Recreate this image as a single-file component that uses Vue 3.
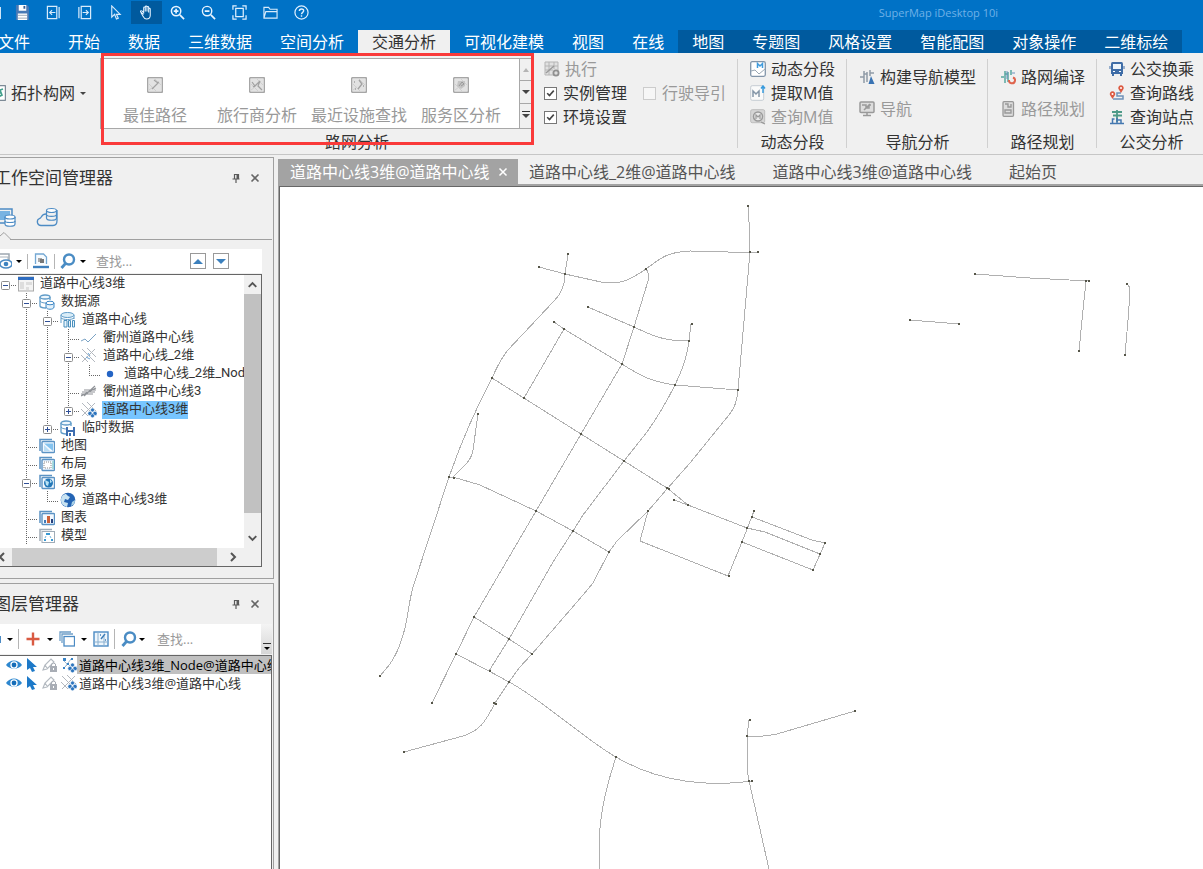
<template>
  <div class="desktop">
    <!-- title bar -->
    <header class="title-bar">
      <div class="quick-bar">
        <span class="quick-edge"></span>
        <button
          v-for="tool in quickTools"
          :key="tool.icon"
          type="button"
          class="quick-button"
          :class="{ active: tool.active }"
          :aria-label="tool.label"
        >
          <svg class="icon-quick" viewBox="0 0 16 16" v-html="icons[tool.icon]"></svg>
        </button>
      </div>
      <span class="app-title">SuperMap iDesktop 10i</span>
    </header>

    <!-- ribbon tabs -->
    <nav class="menu-bar">
      <button
        v-for="tab in menuTabs"
        :key="tab.name"
        type="button"
        class="menu-tab"
        :class="tab.type"
      >{{ tab.name }}</button>
    </nav>

    <!-- ribbon -->
    <section class="ribbon">
      <div class="ribbon-group network-group">
        <div class="group-body">
          <button type="button" class="topology-button">
            <svg class="icon" viewBox="0 0 16 16" v-html="icons.topology"></svg>
            <span>拓扑构网</span>
            <i class="caret"></i>
          </button>
          <div class="gallery">
            <div class="gallery-items">
              <button v-for="item in galleryItems" :key="item.name" type="button" class="gallery-item" disabled>
                <svg class="icon" viewBox="0 0 16 16" v-html="icons[item.icon]"></svg>
                <span>{{ item.name }}</span>
              </button>
            </div>
            <div class="gallery-scroll">
              <button type="button" aria-label="上一行" disabled><i class="caret up"></i></button>
              <button type="button" aria-label="下一行"><i class="caret wide"></i></button>
              <button type="button" aria-label="展开"><i class="caret wide bar"></i></button>
            </div>
            <div class="highlight"></div>
          </div>
          <div class="option-grid">
            <button type="button" class="ribbon-button" disabled>
              <svg class="icon" viewBox="0 0 16 16" v-html="icons.execute"></svg>
              <span>执行</span>
            </button>
            <span></span>
            <label class="check"><input type="checkbox" checked />实例管理</label>
            <label class="check disabled"><input type="checkbox" disabled />行驶导引</label>
            <label class="check"><input type="checkbox" checked />环境设置</label>
          </div>
        </div>
        <div class="group-caption">路网分析</div>
      </div>
      <div v-for="group in ribbonGroups" :key="group.name" class="ribbon-group side-group">
        <div class="group-body column" :class="{ loose: group.buttons.length === 2 }">
          <button
            v-for="button in group.buttons"
            :key="button.name"
            type="button"
            class="ribbon-button"
            :disabled="button.disabled"
          >
            <svg class="icon" viewBox="0 0 16 16" v-html="icons[button.icon]"></svg>
            <span>{{ button.name }}</span>
          </button>
        </div>
        <div class="group-caption">{{ group.name }}</div>
      </div>
    </section>

    <main class="workspace">
      <aside class="side">
        <!-- workspace manager -->
        <section class="panel">
          <header class="panel-header">
            <h2>工作空间管理器</h2>
            <button type="button" class="panel-action" aria-label="固定">
              <svg viewBox="0 0 10 10" v-html="icons.pin"></svg>
            </button>
            <button type="button" class="panel-action" aria-label="关闭">
              <svg viewBox="0 0 10 10" v-html="icons.close"></svg>
            </button>
          </header>
          <div class="view-tabs">
            <button type="button" aria-label="本地">
              <svg viewBox="0 0 22 20" v-html="icons.localView"></svg>
            </button>
            <button type="button" aria-label="云端">
              <svg viewBox="0 0 22 20" v-html="icons.cloudView"></svg>
            </button>
          </div>
          <svg class="view-notch" viewBox="0 0 12 8"><path d="M0 4 L4 .5 L11 7.5" fill="none" stroke="#a0a0a0" /></svg>
          <div class="view-line"></div>
          <div class="tool-strip">
            <svg class="icon" viewBox="0 0 16 16" v-html="icons.viewEye"></svg>
            <i class="caret dark"></i>
            <span class="strip-line"></span>
            <svg class="icon" viewBox="0 0 16 16" v-html="icons.drive"></svg>
            <span class="strip-line"></span>
            <svg class="icon" viewBox="0 0 16 16" v-html="icons.search"></svg>
            <i class="caret dark"></i>
            <input type="text" class="search" placeholder="查找..." aria-label="查找" />
            <button type="button" class="step-button" aria-label="上一个"><i class="caret up blue"></i></button>
            <button type="button" class="step-button" aria-label="下一个"><i class="caret blue"></i></button>
          </div>
          <div class="tree-box">
            <div class="tree-main">
              <ul class="tree">
                <li v-for="(node, index) in treeNodes" :key="index" class="tree-row">
                  <component
                    :is="isToggle(node, cell) ? 'button' : 'span'"
                    v-for="(kind, cell) in node.guides.split('')"
                    :key="cell"
                    class="guide"
                    :aria-label="isToggle(node, cell) ? '展开或折叠' : null"
                  >
                    <svg viewBox="0 0 21 18">
                      <path :d="guidePaths[kind]" class="guide-line" />
                      <g v-if="isToggle(node, cell)">
                        <rect x="6.5" y="6.5" width="8" height="8" rx="1" fill="#fff" stroke="#8c8c8c" />
                        <path :d="node.toggle === '+' ? 'M8 10.5h5M10.5 8v5' : 'M8 10.5h5'" stroke="#2f4f96" />
                      </g>
                    </svg>
                  </component>
                  <svg class="icon" viewBox="0 0 16 16" v-html="icons[node.icon]"></svg>
                  <span class="tree-label" :class="{ selected: node.selected }">{{ node.name }}</span>
                </li>
              </ul>
              <div class="scroll-v">
                <svg viewBox="0 0 18 19"><path d="M5 12 L9 8 L13 12" /></svg>
                <div class="thumb-v"></div>
                <svg viewBox="0 0 18 19"><path d="M5 7 L9 11 L13 7" /></svg>
              </div>
            </div>
            <div class="scroll-h">
              <svg viewBox="0 0 12 17"><path d="M4 5 L0 9 L4 13" /></svg>
              <div class="thumb-h"></div>
              <svg class="arrow-right" viewBox="0 0 12 17"><path d="M1 5 L5 9 L1 13" /></svg>
            </div>
          </div>
        </section>

        <!-- layer manager -->
        <section class="panel layer-panel">
          <header class="panel-header">
            <h2>图层管理器</h2>
            <button type="button" class="panel-action" aria-label="固定">
              <svg viewBox="0 0 10 10" v-html="icons.pin"></svg>
            </button>
            <button type="button" class="panel-action" aria-label="关闭">
              <svg viewBox="0 0 10 10" v-html="icons.close"></svg>
            </button>
          </header>
          <div class="layer-tools">
            <span class="cut-icon"></span>
            <i class="caret dark"></i>
            <span class="strip-line"></span>
            <svg class="icon" viewBox="0 0 16 16" v-html="icons.plus"></svg>
            <i class="caret dark"></i>
            <svg class="icon" viewBox="0 0 16 16" v-html="icons.stack"></svg>
            <i class="caret dark"></i>
            <svg class="icon" viewBox="0 0 16 16" v-html="icons.gridMap"></svg>
            <span class="strip-line"></span>
            <svg class="icon" viewBox="0 0 16 16" v-html="icons.search"></svg>
            <i class="caret dark search-caret"></i>
            <input type="text" class="search" placeholder="查找..." aria-label="查找图层" />
            <span class="overflow-mark"><i class="caret dark bar"></i></span>
          </div>
          <ul class="layers">
            <li v-for="layer in layers" :key="layer.name" class="layer-row">
              <svg class="icon" viewBox="0 0 16 16" v-html="icons.eye"></svg>
              <svg class="icon" viewBox="0 0 16 16" v-html="icons.pointer"></svg>
              <svg class="icon" viewBox="0 0 16 16" v-html="icons.editLock"></svg>
              <svg class="icon" viewBox="0 0 16 16" v-html="icons[layer.icon]"></svg>
              <span class="layer-name" :class="{ selected: layer.selected }">{{ layer.name }}</span>
            </li>
          </ul>
        </section>
      </aside>

      <!-- documents -->
      <section class="documents">
        <div class="doc-tabs">
          <button
            v-for="(doc, index) in documents"
            :key="index"
            type="button"
            class="doc-tab"
            :class="{ active: index === 0 }"
          >
            <span>{{ doc }}</span>
            <svg v-if="index === 0" viewBox="0 0 10 10" v-html="icons.tabClose"></svg>
          </button>
        </div>
        <div class="map">
          <svg width="923" height="682" viewBox="280 187 923 682">
            <path v-for="road in roads" :key="road" :d="road" class="road" />
            <rect
              v-for="[x, y] in junctions"
              :key="x + '-' + y"
              :x="x - 1"
              :y="y - 1"
              width="2"
              height="2"
              class="junction"
            />
          </svg>
        </div>
      </section>
    </main>
  </div>
</template>

<script setup>
// shared pieces of the icons
const grayTile = '<rect x=".5" y=".5" width="15" height="15" rx="1.5" fill="#e2e2e2" stroke="#a6a6a6" stroke-width="1.4"/><path d="M2 7l7 7M8 2l6 6M2 13l4-3" stroke="#cfcfcf" fill="none"/>';
const folderPair = '<path d="M1 13V1.500h12" fill="none" stroke="#5b93c4" stroke-width="1.500"/><rect x="3" y="3.500" width="12.500" height="11" rx="1" fill="#f3f9ff" stroke="#5b93c4" stroke-width="1.400"/>';
const crossRoads = '<path d="M1 1l13 13M14 1L1 14M6 0l9 9M0 7l7 7" stroke="#b3b8bf" fill="none"/>';
const railMark = '<path d="M1 8h4M5 2v12M11 1v6M8 3v10M5 5h3M11 4h4" stroke="#8f9aa6" stroke-width="1.500" fill="none"/>';
const database = '<path d="M1 3v9c0 1 3 2 6 2M11 3v3" fill="none" stroke="#5f9bc8" stroke-width="1.300"/><ellipse cx="6" cy="3" rx="5" ry="2" fill="#eef7fd" stroke="#5f9bc8" stroke-width="1.300"/><path d="M1 7c1 2 5 2 6 2" fill="none" stroke="#5f9bc8"/>';
const cluster = '<g fill="#2c74bd" stroke="#fff" stroke-width=".6"><circle cx="11.500" cy="8" r="2"/><circle cx="9" cy="11.500" r="2.200"/><circle cx="14" cy="11.500" r="2.200"/><circle cx="11.500" cy="13.800" r="2"/></g>';

const icons = {
  save: '<path d="M1 0h12l2 2v14H1z" fill="#4779b5"/><path d="M4 0h8v6H4zM3 9h10v7H3z" fill="#fff"/><path d="M9 1h2v3H9z" fill="#345f94"/><path d="M3 11h10M3 14h10" stroke="#9aa7b5"/>',
  back: '<path d="M1.500 1.500h10v13h-10zM14 2v12M4 8h6M6.500 5.500L4 8l2.500 2.500" fill="none" stroke="#d8ebfb" stroke-width="1.300"/>',
  forward: '<path d="M4.500 1.500h10v13h-10zM2 2v12M6 8h6M9.500 5.500L12 8l-2.500 2.500" fill="none" stroke="#d8ebfb" stroke-width="1.300"/>',
  cursor: '<path d="M4 1v12l3-3 2 5 2-1-2-4h4z" fill="none" stroke="#d8ebfb" stroke-width="1.200"/>',
  hand: '<path d="M5 10L2 7.500C1 6.500 2 5.500 3.500 6.500L5 8V3c0-1.300 1.700-1.300 1.700 0v4V2c0-1.300 1.800-1.300 1.800 0v5V2.500c0-1.300 1.800-1.300 1.800 0V8V4.500c0-1.200 1.700-1.200 1.700 0V11c0 2.500-1 4-4 4S5.500 13.500 2 8" fill="none" stroke="#e8f4ff" stroke-width="1.100"/>',
  zoomIn: '<circle cx="6.500" cy="6.500" r="5" fill="none" stroke="#e8f4ff" stroke-width="1.600"/><path d="M4 6.500h5M6.500 4v5M10.500 10.500L15 15" stroke="#e8f4ff" stroke-width="1.800"/>',
  zoomOut: '<circle cx="6.500" cy="6.500" r="5" fill="none" stroke="#e8f4ff" stroke-width="1.500"/><path d="M4 6.500h5M10.500 10.500L15 15" stroke="#e8f4ff" stroke-width="1.800"/>',
  extent: '<path d="M1 5V1h4M11 1h4v4M15 11v4h-4M5 15H1v-4M4 3.500h8v9H4z" fill="none" stroke="#e0f0ff" stroke-width="1.300"/>',
  folder: '<path d="M1 14V2.500h5l1.500 2H15V14zM1 14l2-7h12" fill="none" stroke="#d8ebfb" stroke-width="1.200"/>',
  help: '<circle cx="8" cy="8" r="7" fill="none" stroke="#e0f0ff" stroke-width="1.300"/><path d="M5.700 6.500c0-3 4.600-3 4.600-.3 0 1.800-2.300 1.600-2.300 3.800M8 11v1.600" fill="none" stroke="#e0f0ff" stroke-width="1.500"/>',
  topology: '<rect x=".5" y=".5" width="15" height="15" rx="1" fill="#fff" stroke="#7d8a96" stroke-width="1.400"/><path d="M8 12l4-2-2-5 3-1M9 8h2" stroke="#43a08c" fill="none" stroke-width="1.600"/>',
  bestPath: grayTile + '<path d="M7 3l4 3-6 6M10 6l2-1" stroke="#a2a2a2" fill="none" stroke-width="1.200"/>',
  salesman: grayTile + '<path d="M3 5l3 4 5-5-2 5 4 4M4 10l3-2" stroke="#a2a2a2" fill="none" stroke-width="1.200"/>',
  facility: grayTile + '<path d="M8 3l3 4-4 5M3 5h1M12 9h1M4 12h1" stroke="#a2a2a2" fill="none" stroke-width="1.300"/>',
  service: grayTile + '<path d="M5 4h7v5l-4 3-4-3z" fill="#c4c4c4"/><path d="M6 9l3-4 2 2-3 2" stroke="#999" fill="none"/>',
  execute: '<path d="M1 1h13v13H1zM1 5h13M5 1v13M1 9h8M10 1v7" fill="#e1e1e1" stroke="#b5b5b5"/><path d="M2 12l8-7" stroke="#9a9a9a" stroke-width="1.500"/><circle cx="12" cy="12" r="2.600" fill="#ddd" stroke="#909090" stroke-width="1.800"/>',
  segment: '<rect x=".7" y=".7" width="14.600" height="14.600" rx="1.500" fill="#fff" stroke="#8295a9" stroke-width="1.300"/><path d="M1 10l4-1 4 4 6-5" fill="none" stroke="#9aa7b3"/><path d="M7.500 7V2.500L10 5l2.500-2.500V7" fill="none" stroke="#409bdc" stroke-width="1.500"/>',
  extractM: '<rect x=".7" y=".7" width="13" height="14.600" rx="1.500" fill="#fafafa" stroke="#c5ccd3"/><path d="M3 12V6l3 3 3-3v6" fill="none" stroke="#8496a8" stroke-width="1.500"/><path d="M13 8V1M11 3.500L13 1l2 2.500" fill="none" stroke="#399bdd" stroke-width="1.500"/>',
  queryM: '<rect x=".7" y=".7" width="14" height="13" rx="1.500" fill="#d5d5d5" stroke="#bdbdbd"/><circle cx="8" cy="7.500" r="4.500" fill="#e8e8e8" stroke="#999" stroke-width="1.500"/><path d="M6 10V6l2 2 2-2v4M11 13l4 2" fill="none" stroke="#999" stroke-width="1.200"/>',
  navModel: railMark + '<path d="M12 7l3.500 8h-6z" fill="#3973b3"/>',
  navigate: '<rect x="1" y="1" width="14" height="10.500" rx="1" fill="#ddd" stroke="#999" stroke-width="1.500"/><path d="M3 4h4v3h3V4h2M8 12v2M4 14.500h8M5 9l6-6" fill="none" stroke="#999" stroke-width="1.500"/>',
  compile: '<path d="M1 8h3M5 2v12M11 1v5M8 3v10M5 5h3" stroke="#57a7a0" stroke-width="1.500" fill="none"/><path d="M7 2v8M12 4h3" stroke="#6d90bc" fill="none"/><path d="M9 11a3 3 0 1 0 4-2.500" fill="none" stroke="#df654e" stroke-width="2"/>',
  plan: '<rect x="3" y=".7" width="10.500" height="14.600" rx="1" fill="#ddd" stroke="#999" stroke-width="1.300"/><path d="M5 3h3v3h3V3M5 9h6v3H5z" fill="none" stroke="#999" stroke-width="1.400"/>',
  bus: '<path d="M3.500 1h9q1.500 0 1.500 2v10H2V3q0-2 1.500-2z" fill="#3f6da7"/><path d="M4 3h8v5H4z" fill="#eef5fb"/><path d="M4 12.500v2.500M12 12.500v2.500" stroke="#3f6da7" stroke-width="2"/><path d="M1 5v3M15 5v3" stroke="#3f6da7"/><path d="M4 10.500h2M10 10.500h2" stroke="#fff"/>',
  route: '<path d="M4 14h10v-3H8V8h4" fill="none" stroke="#6e91b9" stroke-width="1.500"/><path d="M12 8L9.500 4a2.700 2.700 0 1 1 5 0zM3.500 14L1 10a2.700 2.700 0 1 1 5 0z" fill="#dc5a42"/><circle cx="12" cy="3" r="1" fill="#fff"/><circle cx="3.500" cy="9" r="1" fill="#fff"/>',
  stop: '<path d="M8 1v12M3 3h10M4 6.500h9" stroke="#4e9a88" stroke-width="1.800"/><path d="M1 14.500h14M5.500 10H3.500v4M8 9v5M8 11h4v3" fill="none" stroke="#4478b0" stroke-width="1.500"/>',
  pin: '<path d="M1.500 6h7M3.500 6V1.500h4V6M5 6v4" fill="none" stroke="#5a5a5a" stroke-width="1.200"/><path d="M5.500 2h2v4h-2z" fill="#5a5a5a"/>',
  close: '<path d="M1.500 1.500l7 7M8.500 1.500l-7 7" stroke="#666" stroke-width="1.600"/>',
  tabClose: '<path d="M1.500 1.500l7 7M8.500 1.500l-7 7" stroke="#fff" stroke-width="1.500"/>',
  localView: '<path d="M0 2h18v8M0 16h11" fill="none" stroke="#4c8bc4" stroke-width="1.500"/><path d="M0 4h16v9H0z" fill="#79b3e2"/><path d="M11 10v7c0 3 10 3 10 0v-7" fill="#fff" stroke="#4c8bc4" stroke-width="1.200"/><ellipse cx="16" cy="10" rx="5" ry="2" fill="#fff" stroke="#4c8bc4" stroke-width="1.200"/><path d="M11 14c0 2 10 2 10 0" fill="none" stroke="#4c8bc4" stroke-width="1.200"/>',
  cloudView: '<path d="M10 7C5 7 6 11 3.500 11.500 0 13 1 18.500 5 18.500h12c3 0 4-2 4-5V3" fill="none" stroke="#4c8bc4" stroke-width="1.300"/><ellipse cx="15.500" cy="3.500" rx="5" ry="2" fill="#fff" stroke="#4c8bc4" stroke-width="1.200"/><path d="M10.500 4v7c0 3 10 3 10 0V4M10.500 7.500c0 2.500 10 2.500 10 0" fill="none" stroke="#4c8bc4" stroke-width="1.200"/>',
  viewEye: '<path d="M1 12V1h12v6" fill="none" stroke="#9da7b0" stroke-width="1.500"/><path d="M4 4h8v3" fill="none" stroke="#aab3bb"/><ellipse cx="10" cy="11" rx="6" ry="4" fill="#fff" stroke="#4c8bc4" stroke-width="1.500"/><circle cx="10" cy="11" r="2.300" fill="#3e83c0"/>',
  drive: '<path d="M2.500 11V1h8l3 3v7" fill="#f6fbff" stroke="#74a8d3" stroke-width="1.300"/><path d="M5 5h4v4H5z" fill="#a8a8a8"/><path d="M7 6h4v4H7z" fill="#777"/><path d="M0 14h16" stroke="#3f80bd" stroke-width="2.400"/>',
  search: '<circle cx="9" cy="6.500" r="5" fill="none" stroke="#4a8cc4" stroke-width="2.400"/><path d="M5.500 10.500L1.500 15" stroke="#4a8cc4" stroke-width="2.800"/>',
  windowPane: '<rect x=".5" y="1" width="15" height="14" fill="#f4f4f4" stroke="#aaa"/><path d="M0 1h16v3H0z" fill="#2e6cc0"/><path d="M2 6h4v7H2zM8 6h6v3H8zM8 11h3v3H8z" fill="#ddd"/>',
  datasource: database + '<path d="M7 9v4c0 3 8 3 8 0V9" fill="#e4f2fb" stroke="#3d86c4"/><ellipse cx="11" cy="9" rx="4" ry="1.800" fill="#fff" stroke="#3d86c4"/>',
  database: '<path d="M1 3v8M14 3v4" stroke="#5f9bc8"/><ellipse cx="7.500" cy="3" rx="6.500" ry="2.500" fill="#d9edf8" stroke="#5f9bc8"/><path d="M1 6c2 2 11 2 13 0" fill="none" stroke="#5f9bc8"/><path d="M4 8.500h3V15H4zM8.500 8.500h2V15h-2zM12.500 8.500h2V15h-2z" fill="#e8f4fc" stroke="#4b90bd"/>',
  line: '<path d="M0 11l4-2 3 3 8-8" fill="none" stroke="#7aa2c4"/>',
  network: crossRoads + '<path d="M7 5l2 3M5 9l4 2" stroke="#6ba5d8" fill="none"/>',
  node: '<circle cx="8" cy="8" r="3.200" fill="#2464c4"/>',
  line3d: '<path d="M0 12L15 4M3 12L14 2M1 8h13M0 10h12M3 6h12" stroke="#8f9297" stroke-width="1.200" fill="none"/>',
  network3d: crossRoads + cluster,
  nodes3d: '<path d="M2 3l4 4M10 2L4 10M2 12l4-4M6 6l5 5" stroke="#9db8d0" fill="none"/><path d="M2 1h3v3H2zM10 1h2v2h-2zM6 6h2v2H6zM2 10h2v2H2z" fill="#3a84c6"/>' + cluster,
  tempData: database + '<path d="M6 7h9v9H6z" fill="#3e6eb0"/><path d="M8 7h5v3H8zM8 12h5v4H8z" fill="#fff"/><path d="M9 13h2v3H9z" fill="#3e6eb0"/>',
  mapFolder: folderPair + '<path d="M5 5.500h9v7.500z" fill="#84c3ef"/><path d="M5 7l6 6H5z" fill="#b9ddf5"/>',
  layout: folderPair + '<path d="M5 6h7v6H5z" fill="#fff" stroke="#8b8b8b" stroke-dasharray="1 1"/><path d="M14 5v8" stroke="#67c1c0"/>',
  scene: folderPair + '<circle cx="9.500" cy="9" r="4.500" fill="#2478b8"/><path d="M6 6l4 2-1 4-2-1zM11 5l2 3-2 1z" fill="#b8e2f5"/>',
  globe: '<circle cx="8" cy="8" r="7.300" fill="#2464b4"/><path d="M1 8c0-4 3-6 5-6L8 4l2 1-2 3-3-1-1 3 4 1-1 4c-3-1-6-3-6-7z" fill="#c8e3f2"/><path d="M12 10l3-2c0 3-1 5-4 6z" fill="#a8d1e8"/>',
  chart: folderPair + '<path d="M5 10h2v3H5z" fill="#4279b5"/><path d="M8 6h3v7H8z" fill="#cd6138"/><path d="M12 9h2v4h-2z" fill="#253f7c"/>',
  model: '<path d="M1 13V1.500h12" fill="none" stroke="#a0acb7" stroke-width="1.500"/><rect x="3" y="3.500" width="12.500" height="11" fill="#fff" stroke="#a0acb7"/><path d="M7 5h4v2H7zM5 11h2v2H5zM12 11h2v2h-2z" fill="#3998d2"/><path d="M7 8l-1 2M11 8l1 2" stroke="#76b6dc"/>',
  plus: '<path d="M8 1.500v13M1.500 8h13" stroke="#d95a42" stroke-width="2.400"/>',
  stack: '<path d="M1 10V1h11M3 12V3h11" fill="none" stroke="#6f9fc8" stroke-width="1.300"/><rect x="5" y="5.500" width="10.500" height="9.500" fill="#fff" stroke="#4c8bc4" stroke-width="1.300"/>',
  gridMap: '<rect x="1" y="1" width="14" height="14" fill="#eef6fc" stroke="#4c8bc4" stroke-width="1.400"/><path d="M1 11h14M5 1v14M11 5v10" stroke="#8ab0d0"/><path d="M8 8l4-5M7 4h1M12 9h1" stroke="#3f7eb8" stroke-width="1.500"/>',
  eye: '<path d="M0 8C4 2 12 2 16 8 12 13 4 13 0 8z" fill="#2d87cf"/><circle cx="8" cy="8" r="3.700" fill="#fff"/><circle cx="8" cy="8" r="2.400" fill="#156db8"/>',
  pointer: '<path d="M3 1v12l3-2 2 4 3-1-2-4h4z" fill="#1d79c8"/>',
  editLock: '<path d="M1 13l2-5 6-6 3 3-7 7zM3 8l2 3" fill="none" stroke="#b4bac1" stroke-width="1.200"/><rect x="8" y="9" width="7" height="6" fill="#a8adb5"/><path d="M9.500 9V7q2-2 4 0v2" fill="none" stroke="#a8adb5"/><path d="M11 11h1v2h-1z" fill="#fff"/>',
}

const quickTools = [
  { icon: 'save', label: '保存' },
  { icon: 'back', label: '后退' },
  { icon: 'forward', label: '前进' },
  { icon: 'cursor', label: '选择' },
  { icon: 'hand', label: '漫游', active: true },
  { icon: 'zoomIn', label: '放大' },
  { icon: 'zoomOut', label: '缩小' },
  { icon: 'extent', label: '全幅' },
  { icon: 'folder', label: '打开' },
  { icon: 'help', label: '帮助' },
]

const menuTabs = [
  { name: '文件', type: 'file' },
  { name: '开始' },
  { name: '数据' },
  { name: '三维数据' },
  { name: '空间分析' },
  { name: '交通分析', type: 'active' },
  { name: '可视化建模' },
  { name: '视图' },
  { name: '在线' },
  { name: '地图', type: 'context' },
  { name: '专题图', type: 'context' },
  { name: '风格设置', type: 'context' },
  { name: '智能配图', type: 'context' },
  { name: '对象操作', type: 'context' },
  { name: '二维标绘', type: 'context' },
]

const galleryItems = [
  { name: '最佳路径', icon: 'bestPath' },
  { name: '旅行商分析', icon: 'salesman' },
  { name: '最近设施查找', icon: 'facility' },
  { name: '服务区分析', icon: 'service' },
]

const ribbonGroups = [
  {
    name: '动态分段',
    buttons: [
      { name: '动态分段', icon: 'segment' },
      { name: '提取M值', icon: 'extractM' },
      { name: '查询M值', icon: 'queryM', disabled: true },
    ],
  },
  {
    name: '导航分析',
    buttons: [
      { name: '构建导航模型', icon: 'navModel' },
      { name: '导航', icon: 'navigate', disabled: true },
    ],
  },
  {
    name: '路径规划',
    buttons: [
      { name: '路网编译', icon: 'compile' },
      { name: '路径规划', icon: 'plan', disabled: true },
    ],
  },
  {
    name: '公交分析',
    buttons: [
      { name: '公交换乘', icon: 'bus' },
      { name: '查询路线', icon: 'route' },
      { name: '查询站点', icon: 'stop' },
    ],
  },
]

// one letter per indent column: . empty, i line, t branch, l last branch, r root
const treeNodes = [
  { guides: 'r', toggle: '-', icon: 'windowPane', name: '道路中心线3维' },
  { guides: '.t', toggle: '-', icon: 'datasource', name: '数据源' },
  { guides: '.it', toggle: '-', icon: 'database', name: '道路中心线' },
  { guides: '.iit', icon: 'line', name: '衢州道路中心线' },
  { guides: '.iit', toggle: '-', icon: 'network', name: '道路中心线_2维' },
  { guides: '.iiil', icon: 'node', name: '道路中心线_2维_Nod' },
  { guides: '.iit', icon: 'line3d', name: '衢州道路中心线3' },
  { guides: '.iil', toggle: '+', icon: 'network3d', name: '道路中心线3维', selected: true },
  { guides: '.il', toggle: '+', icon: 'tempData', name: '临时数据' },
  { guides: '.t', icon: 'mapFolder', name: '地图' },
  { guides: '.t', icon: 'layout', name: '布局' },
  { guides: '.t', toggle: '-', icon: 'scene', name: '场景' },
  { guides: '.il', icon: 'globe', name: '道路中心线3维' },
  { guides: '.t', icon: 'chart', name: '图表' },
  { guides: '.t', icon: 'model', name: '模型' },
]

const guidePaths = {
  '.': '',
  i: 'M10.5 0v18',
  t: 'M10.5 0v18M12 10.5h9',
  l: 'M10.5 0v11M12 10.5h9',
  r: 'M12 10.5h9',
}

const isToggle = (node, cell) => Boolean(node.toggle) && cell === node.guides.length - 1

const layers = [
  { name: '道路中心线3维_Node@道路中心线', icon: 'nodes3d', selected: true },
  { name: '道路中心线3维@道路中心线', icon: 'network3d' },
]

const documents = ['道路中心线3维@道路中心线', '道路中心线_2维@道路中心线', '道路中心线3维@道路中心线', '起始页']

const roads = [
  'M748 206 L749 222 L750 252 L738 390 C737 405 732 412 724 421 L690 463 L667 489 L648 511 L617 541 L609 552 L593 583 L583 595 L532 654 L519 668 L509 682 L495 703 C485 723 479 731 463 736 L404 752',
  'M758 252 L728 252 L690 251 C668 252 662 257 646 269 C627 282 618 285 601 282 L565 274 L539 267',
  'M568 254 L565 274 C565 286 560 295 554 301 L507 351 Q499 362 492 378 C475 410 463 437 449 477 L413 587 C407 610 408 622 402 638 C397 655 391 664 379 677',
  'M646 269 C649 272 649 276 648 281 L634 327 L622 364 L581 434 L536 511 L474 617 L456 654 L432 703',
  'M691 324 L689 341 C687 358 682 371 675 385 C664 407 652 425 647 432 L624 461 L583 515 L573 531 L553 562 L509 639 L489 671',
  'M588 307 L634 327 C655 337 665 341 689 341',
  'M554 322 L564 329 L622 364 C645 379 655 382 675 385 L738 390',
  'M564 329 L524 398',
  'M492 378 L581 434 L624 461 L667 488 L688 505',
  'M478 414 L473 450 C472 458 468 462 463 467 L453 477',
  'M449 477 L453 477 L480 485 L536 511 L573 531 L609 552',
  'M474 617 L509 639 L532 654',
  'M456 654 L489 671 L509 682 C540 698 587 741 616 757 C660 783 710 787 752 781',
  'M616 757 C602 800 597 828 600 869',
  'M749 720 L747 736 L747 768 L749 781 L769 869',
  'M855 711 L777 734 Q764 737 747 736',
  'M648 511 L640 541 L728 576 L742 542 L754 511',
  'M674 500 L688 505 L747 528 L765 532 L820 554',
  'M752 517 L812 540 L825 543 L813 570 L742 542',
  'M975 274 L1030 278 L1089 281',
  'M1086 281 L1083 310 L1079 351',
  'M1127 284 Q1130 286 1130 292 L1128 320 L1125 355',
  'M910 320 L959 324',
]

const junctions = [
  [748, 206], [750, 252], [758, 252], [568, 254], [539, 267], [565, 274], [646, 269], [588, 307],
  [554, 322], [564, 329], [634, 327], [692, 324], [689, 341], [622, 364], [675, 385], [738, 390],
  [492, 378], [524, 398], [478, 414], [581, 434], [624, 461], [449, 477], [454, 478], [667, 488],
  [669, 489], [536, 511], [573, 531], [609, 552], [648, 511], [674, 500], [688, 505], [747, 528],
  [754, 511], [752, 517], [742, 542], [825, 543], [820, 554], [813, 570], [729, 576], [474, 617],
  [509, 639], [532, 654], [456, 654], [490, 671], [509, 682], [432, 703], [494, 703], [496, 704],
  [380, 676], [404, 752], [616, 757], [749, 781], [752, 781], [747, 736], [750, 720], [855, 711],
  [975, 274], [1086, 281], [1089, 281], [1079, 351], [1127, 284], [1125, 355], [910, 320], [959, 324],
]
</script>

<style>
body {
  background: #f0f0f0;
}
</style>

<style scoped>
.desktop {
  display: flex;
  flex-direction: column;
  height: 100vh;
  overflow: hidden;
  background: #f0f0f0;
  color: #333;
  font-family: "Open Sans", "Noto Sans CJK SC", sans-serif;
  font-size: 16px;
  line-height: 24px;
}

button,
input {
  padding: 0;
  border: 0;
  background: none;
  color: inherit;
  font: inherit;
}

ul {
  margin: 0;
  padding: 0;
  list-style: none;
}

svg {
  display: block;
  flex: none;
}

.icon {
  width: 16px;
  height: 16px;
}

/* triangles */
.caret {
  flex: none;
  width: 0;
  border: solid transparent;
  border-width: 3px 3px 0;
  border-top-color: #444;
}

.caret.dark {
  border-top-color: #000;
}

.caret.wide {
  border-width: 4px 4px 0;
}

.caret.up {
  border-width: 0 3px 4px;
  border-bottom-color: #b5b5b5;
}

.caret.blue {
  border-width: 5px 5px 0;
  border-top-color: #3c80bd;
}

.caret.up.blue {
  border-width: 0 5px 5px;
  border-bottom-color: #3c80bd;
}

.caret.bar::before {
  content: "";
  display: block;
  width: 8px;
  height: 1px;
  margin: -7px 0 0 -4px;
  background: #333;
}

/* title bar */
.title-bar {
  display: flex;
  flex: none;
  align-items: center;
  justify-content: space-between;
  height: 30px;
  background: #0072c6;
}

.quick-bar {
  display: flex;
  align-items: center;
  height: 24px;
  margin-bottom: 5px;
}

.quick-edge {
  width: 1px;
  height: 12px;
  margin-right: 6px;
  background: #cfe5f7;
}

.quick-button {
  display: grid;
  place-items: center;
  width: 31px;
  height: 23px;
}

.quick-button.active {
  background: #005a9e;
}

.icon-quick {
  width: 15px;
  height: 15px;
}

.app-title {
  margin: 0 205px 4px 0;
  color: #6fb1e6;
  font-size: 11px;
}

/* ribbon tabs */
.menu-bar {
  display: flex;
  flex: none;
  height: 23px;
  background: #0072c6;
  white-space: nowrap;
}

.menu-tab {
  flex: none;
  padding: 0 14px;
  color: #fff;
}

.menu-tab.file {
  margin-left: -2px;
  padding: 0 24px 0 0;
}

.menu-tab.active {
  background: #f0f0f0;
  color: #333;
}

.menu-tab.context {
  background: #005a9e;
}

/* ribbon */
.ribbon {
  display: flex;
  flex: none;
  border-bottom: 1px solid #c6c6c6;
  white-space: nowrap;
}

.ribbon-group {
  flex: none;
  padding-top: 4px;
}

.side-group {
  padding: 4px 11px 0 13px;
  background: linear-gradient(#d0d0d0, #d0d0d0) 0 6px / 1px 89px no-repeat;
}

.network-group {
  width: 737px;
}

.group-body {
  display: flex;
  height: 72px;
}

.group-body.column {
  flex-direction: column;
}

.group-body.loose {
  gap: 8px;
  justify-content: center;
}

.group-caption {
  padding-top: 1px;
  text-align: center;
}

.network-group .group-caption {
  padding-right: 23px;
}

.ribbon-button {
  display: flex;
  gap: 5px;
  align-items: center;
  height: 24px;
}

.ribbon-button:disabled {
  color: #999;
}

.topology-button {
  display: flex;
  flex: none;
  gap: 5px;
  align-items: center;
  width: 110px;
  margin-left: -10px;
}

.gallery {
  position: relative;
  display: flex;
  flex: none;
  width: 433px;
  height: 71px;
  margin-top: 1px;
  box-sizing: border-box;
  border: 1px solid #a8a8a8;
  background: #fff;
}

.gallery-items {
  display: flex;
  flex: 1;
  padding-left: 3px;
}

.gallery-item {
  display: flex;
  flex-direction: column;
  gap: 10px;
  align-items: center;
  width: 102px;
  padding-top: 18px;
  color: #999;
}

.gallery-scroll {
  display: grid;
  grid-template-rows: 21px 22px 24px;
  gap: 1px;
  width: 12px;
  border-left: 1px solid #a8a8a8;
  background: #a8a8a8;
}

.gallery-scroll button {
  display: grid;
  place-items: center;
  background: #f0f0f0;
}

.highlight {
  position: absolute;
  inset: -6px -2px -17px 0;
  border: 3px solid #fa3a3a;
  pointer-events: none;
}

.option-grid {
  display: grid;
  grid-template-columns: 99px auto;
  grid-auto-rows: 24px;
  margin-left: 11px;
}

.check {
  display: flex;
  gap: 6px;
  align-items: center;
}

.check.disabled {
  color: #999;
}

.check input {
  display: grid;
  place-items: center;
  width: 13px;
  height: 13px;
  margin: 0;
  border: 1px solid #777;
  background: #fff;
  appearance: none;
}

.check input:disabled {
  border-color: #ccc;
  background: #f6f6f6;
}

.check input:checked::after {
  content: "";
  width: 7px;
  height: 3px;
  margin-bottom: 2px;
  border: solid #444;
  border-width: 0 0 2px 2px;
  box-sizing: content-box;
  transform: rotate(-48deg) scale(0.8);
}

/* work area */
.workspace {
  display: flex;
  flex: 1;
  min-height: 0;
}

.side {
  display: flex;
  flex: none;
  flex-direction: column;
  gap: 4px;
  width: 274px;
  padding-top: 2px;
}

.panel {
  border: 1px solid #a0a0a0;
  border-left: 0;
}

.panel-header {
  display: flex;
  align-items: center;
  height: 40px;
  padding-right: 13px;
}

.panel-header h2 {
  flex: 1;
  margin: 0 0 0 -6px;
  font-size: 17px;
  font-weight: 400;
}

.panel-action svg {
  width: 10px;
  height: 10px;
}

.panel-action + .panel-action {
  margin-left: 9px;
}

.view-tabs {
  display: flex;
  gap: 15px;
  margin-left: -6px;
  padding: 9px 0 7px;
}

.view-tabs svg {
  width: 22px;
  height: 20px;
}

.view-tabs button + button {
  margin-left: 5px;
}

.view-notch {
  width: 12px;
  height: 8px;
  margin-top: -2px;
}

.view-line {
  height: 1px;
  margin: -1px 1px 9px 10px;
  background: #a0a0a0;
}

.tool-strip {
  display: flex;
  gap: 4px;
  align-items: center;
  width: 266px;
  height: 24px;
  margin-bottom: 1px;
  margin-left: -4px;
  background: #fff;
}

.strip-line {
  flex: none;
  width: 1px;
  height: 15px;
  margin: 0 1px;
  background: #b5b5b5;
}

.search {
  width: 90px;
  margin-left: 6px;
  outline: 0;
  font-size: 13px;
}

.search::placeholder {
  color: #999;
  opacity: 1;
}

.step-button {
  display: grid;
  flex: none;
  place-items: center;
  width: 16px;
  height: 16px;
  margin-right: 3px;
  border: 1px solid #999;
}

/* workspace tree */
.tree-box {
  width: 261px;
  margin-bottom: 11px;
  border: 1px solid #666;
  border-left: 0;
}

.tree-main {
  display: flex;
}

.tree {
  flex: 1;
  min-width: 0;
  padding-bottom: 3px;
  overflow: hidden;
  background: #fff;
  font-family: Roboto, "Noto Sans CJK SC", sans-serif;
  font-size: 13px;
  line-height: 16px;
  white-space: nowrap;
}

.tree-row {
  display: flex;
  align-items: center;
  height: 18px;
  margin-left: -5px;
}

.tree-row .icon {
  margin: 0 5px 0 2px;
}

.guide,
.guide svg {
  flex: none;
  width: 21px;
  height: 18px;
}

.guide-line {
  fill: none;
  stroke: #666;
  stroke-dasharray: 1 1;
}

.tree-label {
  padding: 0 0 2px 1px;
}

.tree-label.selected {
  background: #77c5ff;
}

.scroll-v {
  display: flex;
  flex: none;
  flex-direction: column;
  width: 17px;
}

.scroll-v svg {
  width: 17px;
  height: 19px;
}

.thumb-v {
  width: 17px;
  height: 219px;
  margin-bottom: auto;
  background: #c1c1c1;
}

.scroll-h {
  display: flex;
  height: 18px;
}

.scroll-v path,
.scroll-h path {
  fill: none;
  stroke: #555;
  stroke-width: 2;
}

.scroll-h svg {
  width: 12px;
  height: 17px;
}

.thumb-h {
  width: 205px;
  background: #cdcdcd;
}

.scroll-h .arrow-right {
  margin-left: 13px;
}

/* layer manager */
.layer-panel {
  display: flex;
  flex: 1;
  flex-direction: column;
  min-height: 0;
  border-bottom: 0;
}

.layer-tools {
  display: flex;
  flex: none;
  align-items: center;
  height: 30px;
  margin-right: 1px;
  background: #fff;
}

.layer-tools .caret {
  margin-left: 6px;
}

.layer-tools .strip-line {
  height: 20px;
  margin: 0 6px 0 5px;
}

.layer-tools .caret + .icon {
  margin-left: 6px;
}

.layer-tools .search-caret {
  margin-left: 2px;
}

.layer-tools .search {
  flex: 1;
  min-width: 0;
  margin-left: 12px;
}

.cut-icon {
  width: 1px;
  height: 7px;
  background: #4c8bc4;
}

.overflow-mark {
  display: flex;
  align-items: flex-end;
  justify-content: center;
  width: 11px;
  height: 26px;
  padding-bottom: 4px;
  box-sizing: content-box;
  background: linear-gradient(#f4f4f4, #d6d6d6);
}

.layer-tools .overflow-mark .caret {
  margin: 0;
}

.layers {
  flex: 1;
  margin: 1px 1px 0 0;
  overflow: hidden;
  border: 1px solid #666;
  border-width: 1px 1px 0 0;
  background: #fff;
  font-size: 13px;
  line-height: 18px;
  white-space: nowrap;
}

.layer-row {
  display: flex;
  gap: 2px;
  align-items: center;
  height: 18px;
  padding-left: 6px;
}

.layer-row .icon:nth-child(4) {
  margin-left: 1px;
}

.layer-name {
  flex: 1;
  margin-left: -2px;
  padding-left: 2px;
}

.layer-name.selected {
  background: #c0c0c0;
  color: #000;
}

/* documents */
.documents {
  display: flex;
  flex: 1;
  flex-direction: column;
  min-width: 0;
  margin-left: 4px;
  padding-top: 4px;
}

.doc-tabs {
  display: flex;
  flex: none;
  height: 25px;
  border-bottom: 2px solid #a3a3a3;
  white-space: nowrap;
}

.doc-tab {
  flex: none;
  padding: 0 26px 0 11px;
  color: #555;
}

.doc-tab.active {
  display: flex;
  align-items: center;
  justify-content: space-between;
  width: 240px;
  padding: 0 10px 0 12px;
  background: #a3a3a3;
  color: #fff;
}

.doc-tab svg {
  width: 10px;
  height: 10px;
}

.map {
  flex: 1;
  min-height: 0;
  overflow: hidden;
  border: solid #666;
  border-width: 1px 0 0 1px;
  box-shadow: -1px 0 #a3a3a3;
  margin-left: 1px;
  background: #fff;
}

.road {
  fill: none;
  stroke: #b0b0b0;
  shape-rendering: crispEdges;
}

.junction {
  fill: #555548;
}
</style>
